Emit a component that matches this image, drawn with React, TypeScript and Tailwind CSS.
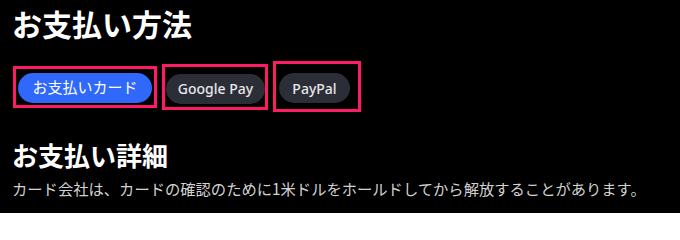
const cjk = "font-['Noto_Sans_CJK_JP',sans-serif]";
const latin = "font-['Noto_Sans','Noto_Sans_CJK_JP',sans-serif]";

export default function App() {
  return (
    <div className={`h-[213px] w-[680px] overflow-hidden bg-black px-3 text-white ${cjk}`}>
      <h1 className="pt-[3px] text-[30px] leading-[40px] font-bold">お支払い方法</h1>

      <div className="mt-[18px] ml-[1px] flex items-center gap-[5px]">
        <div className="border-[3px] border-[#ff1a66] pt-[4px] pr-[2px] pb-[2px] pl-[2px]">
          <button className={`flex h-[30px] w-[134px] items-center justify-center rounded-full bg-[#2f68fb] text-[15px] text-white ${cjk}`}>
            お支払いカード
          </button>
        </div>
        <div className="border-[3px] border-[#ff1a66] pt-[7px] pr-0 pb-[3px] pl-[1px]">
          <button className={`flex h-[30px] w-[99px] items-center justify-center rounded-full bg-[#2b2e37] text-[14px] font-medium text-[#e6e6ea] ${latin}`}>
            Google Pay
          </button>
        </div>
        <div className="border-[3px] border-[#ff1a66] pt-[9px] pr-[8px] pb-[6px] pl-[3px]">
          <button className={`flex h-[30px] w-[71px] items-center justify-center rounded-full bg-[#2b2e37] text-[14px] font-medium text-[#e6e6ea] ${latin}`}>
            PayPal
          </button>
        </div>
      </div>

      <h2 className="mt-[26px] text-[26px] leading-[34px] font-bold">お支払い詳細</h2>
      <p className="mt-[5px] text-[15.3px] leading-[22px] text-[#d2d2d2]">
        カード会社は、カードの確認のために1米ドルをホールドしてから解放することがあります。
      </p>
    </div>
  );
}
